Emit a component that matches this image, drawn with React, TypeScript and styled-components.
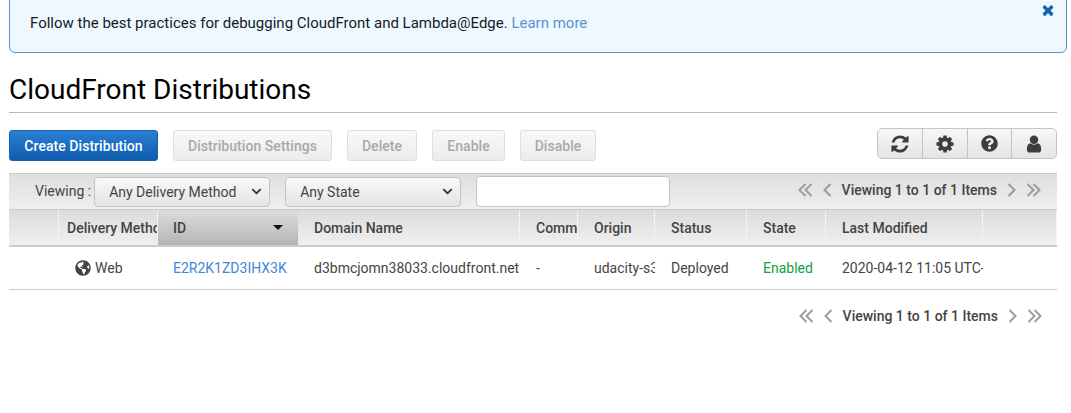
import styled, { createGlobalStyle } from 'styled-components';
import { FaGlobeAmericas, FaQuestionCircle, FaChevronDown } from 'react-icons/fa';

const COLUMNS = '50px 99px 140px 222px 58px 77px 92px 79px 157px 74px';

const REFRESH =
  'M1639 1056q0 5-1 7-64 268-268 434.5t-478 166.5q-146 0-282.5-55t-243.5-157l-129 129q-19 19-45 19t-45-19-19-45v-448q0-26 19-45t45-19h448q26 0 45 19t19 45-19 45l-137 137q71 66 161 102t187 36q134 0 250-65t186-179q11-17 53-117 8-23 30-23h192q13 0 22.5 9.5t9.5 22.5zm25-800v448q0 26-19 45t-45 19h-448q-26 0-45-19t-19-45 19-45l138-138q-148-137-349-137-134 0-250 65t-186 179q-11 17-53 117-8 23-30 23h-199q-13 0-22.5-9.5t-9.5-22.5v-7q65-268 270-434.5t480-166.5q146 0 284 55.5t245 156.5l130-129q19-19 45-19t45 19 19 45z';
const COG =
  'M1152 896q0-106-75-181t-181-75-181 75-75 181 75 181 181 75 181-75 75-181zm512-109v222q0 12-8 23t-20 13l-185 28q-19 54-39 91 35 50 107 138 10 12 10 25t-9 23q-27 37-99 108t-94 71q-12 0-26-9l-138-108q-44 23-91 38-16 136-29 186-7 28-36 28h-222q-14 0-24.5-8.5t-11.5-21.5l-28-184q-49-16-90-37l-141 107q-10 9-25 9-14 0-25-11-126-114-165-168-7-10-7-23 0-12 8-23 15-21 51-66.5t54-70.5q-27-50-41-99l-183-27q-13-2-21-12.5t-8-23.5v-222q0-12 8-23t19-13l186-28q14-46 39-92-40-57-107-138-10-12-10-24 0-10 9-23 26-36 98.5-107.5t94.5-71.5q13 0 26 10l138 107q44-23 91-38 16-136 29-186 7-28 36-28h222q14 0 24.5 8.5t11.5 21.5l28 184q49 16 90 37l142-107q9-9 24-9 13 0 25 10 129 119 165 170 7 8 7 22 0 12-8 23-15 21-51 66.5t-54 70.5q26 50 41 98l183 28q13 2 21 12.5t8 23.5z';
const USER =
  'M1536 1399q0 109-62.5 187t-150.5 78h-854q-88 0-150.5-78t-62.5-187q0-85 8.5-160.5t31.5-152 58.5-131 94-89 134.5-34.5q131 128 313 128t313-128q76 0 134.5 34.5t94 89 58.5 131 31.5 152 8.5 160.5zm-256-887q0 159-112.5 271.5t-271.5 112.5-271.5-112.5-112.5-271.5 112.5-271.5 271.5-112.5 271.5 112.5 112.5 271.5z';
const TIMES =
  'M1490 1322q0 40-28 68l-136 136q-28 28-68 28t-68-28l-294-294-294 294q-28 28-68 28t-68-28l-136-136q-28-28-28-68t28-68l294-294-294-294q-28-28-28-68t28-68l136-136q28-28 68-28t68 28l294 294 294-294q28-28 68-28t68 28l136 136q28 28 28 68t-28 68l-294 294 294 294q28 28 28 68z';

const GlobalStyle = createGlobalStyle`
  html, body { margin: 0; background: #fff; }
  body { font-family: Roboto, "Liberation Sans", sans-serif; color: #333; }
`;

const Page = styled.div`
  width: 1071px;
  height: 413px;
  overflow: hidden;
  padding: 0 14px 0 9px;
  box-sizing: border-box;
`;

const Banner = styled.div`
  position: relative;
  width: 1058px;
  height: 54px;
  box-sizing: border-box;
  margin-top: -1px;
  padding: 14px 20px 0 20px;
  font-size: 15px;
  line-height: 18px;
  color: #16191f;
  background: #eef9ff;
  border: 1px solid #5b8fc9;
  border-radius: 0 0 6px 6px;
`;

const LearnMore = styled.a`
  color: #5a92d2;
`;

const CloseIcon = styled.svg`
  position: absolute;
  top: 2px;
  right: 10px;
  width: 16px;
  height: 16px;
  fill: #0f62ae;
`;

const Title = styled.h1`
  margin: 20px 0 0;
  height: 39px;
  font-size: 28px;
  line-height: 33px;
  font-weight: 400;
  color: #000;
  border-bottom: 1px solid #b9b9b9;
`;

const Actions = styled.div`
  display: flex;
  align-items: center;
  gap: 15px;
  margin-top: 16px;
  height: 32px;
`;

const Button = styled.button<{ $primary?: boolean; $width: number }>`
  width: ${({ $width }) => $width}px;
  height: 31px;
  padding: 1px 0 0;
  box-sizing: border-box;
  font-family: inherit;
  font-size: 14px;
  font-weight: 500;
  letter-spacing: 0.05px;
  border-radius: 3px;
  color: ${({ $primary }) => ($primary ? '#fff' : '#a9a9a9')};
  border: 1px solid ${({ $primary }) => ($primary ? '#1a5fa8' : '#dedede')};
  background: ${({ $primary }) =>
    $primary ? 'linear-gradient(#2a7fd2, #0e5cae)' : 'linear-gradient(#f8f8f8, #ececec)'};
`;

const IconGroup = styled.div`
  display: flex;
  align-self: flex-start;
  margin-left: auto;
  margin-top: -1px;
  width: 180px;
  height: 31px;
  box-sizing: border-box;
  border: 1px solid #c4c4c4;
  border-radius: 5px;
  background: linear-gradient(#f7f7f7, #e4e4e4);
`;

const IconButton = styled.div`
  flex: 1;
  display: flex;
  align-items: center;
  justify-content: center;
  color: #3d3d3d;
  & + & { border-left: 1px solid #c4c4c4; }
`;

const ToolIcon = styled.svg`
  width: 20px;
  height: 20px;
  fill: currentColor;
`;

const QuestionIcon = styled(FaQuestionCircle)`
  font-size: 17px;
`;

const Toolbar = styled.div`
  display: flex;
  align-items: center;
  margin-top: 12px;
  height: 37px;
  box-sizing: border-box;
  border-top: 1px solid #c9c9c9;
  border-bottom: 1px solid #ccc;
  background: linear-gradient(#dedede, #efefef);
  padding-left: 26px;
`;

const ViewingLabel = styled.span`
  font-size: 14px;
  color: #444;
  margin-right: 3px;
  margin-top: -2px;
`;

const Select = styled.div<{ $width: number }>`
  display: flex;
  align-items: center;
  justify-content: space-between;
  width: ${({ $width }) => $width}px;
  height: 30px;
  box-sizing: border-box;
  padding: 0 7px 0 14px;
  font-size: 14px;
  color: #444;
  border: 1px solid #c4c4c4;
  border-radius: 4px;
  background: linear-gradient(#f8f8f8, #e4e4e4);

  svg { font-size: 11px; color: #333; }
  & + & { margin-left: 15px; }
`;

const SearchBox = styled.input`
  width: 194px;
  height: 31px;
  box-sizing: border-box;
  margin-left: 15px;
  border: 1px solid #c4c4c4;
  border-radius: 4px;
  background: #fff;
`;

const Pager = styled.div<{ $bottom?: boolean }>`
  display: flex;
  align-items: center;
  margin-left: auto;
  margin-right: ${({ $bottom }) => ($bottom ? '2px' : '16px')};
  margin-top: ${({ $bottom }) => ($bottom ? '-2px' : '-4px')};
  gap: 7px;
  font-size: 14px;
  font-weight: 500;
  color: #444;
`;

const PagerArrow = styled.svg`
  display: block;
  width: 15px;
  height: 14px;
  fill: none;
  stroke: #9c9c9c;
  stroke-width: 2;
`;

const HeadRow = styled.div`
  display: grid;
  grid-template-columns: ${COLUMNS};
  height: 37px;
  box-sizing: border-box;
  border-bottom: 2px solid #ccc;
  background: linear-gradient(#dcdcdc, #efefef);
`;

const HeadCell = styled.div<{ $sorted?: boolean; $pad?: number }>`
  position: relative;
  display: flex;
  align-items: center;
  overflow: hidden;
  white-space: nowrap;
  padding-left: ${({ $pad }) => $pad ?? 16}px;
  font-size: 14px;
  font-weight: 500;
  color: #444;
  border-right: 1px solid ${({ $sorted }) => ($sorted ? 'transparent' : '#f4f4f4')};
  background: ${({ $sorted }) => ($sorted ? 'linear-gradient(#dddddd, #b5b5b5)' : 'none')};
`;

const SortCaret = styled.span`
  position: absolute;
  right: 14px;
  top: 15px;
  border-left: 5px solid transparent;
  border-right: 5px solid transparent;
  border-top: 5px solid #111;
`;

const BodyRow = styled.div`
  display: grid;
  grid-template-columns: ${COLUMNS};
  height: 44px;
  box-sizing: border-box;
  border-bottom: 1px solid #ccc;
  margin-top: -1px;
`;

const BodyCell = styled.div<{ $tone?: 'link' | 'ok'; $pad?: number }>`
  display: flex;
  align-items: center;
  gap: 4px;
  overflow: hidden;
  white-space: nowrap;
  padding-left: ${({ $pad }) => $pad ?? 16}px;
  font-size: 14px;
  color: ${({ $tone }) => ($tone === 'link' ? '#3f88d8' : $tone === 'ok' ? '#0ea13a' : '#444')};
`;

const WebIcon = styled(FaGlobeAmericas)`
  font-size: 16px;
  color: #444;
`;

const FooterRow = styled.div`
  display: flex;
  margin-top: 20px;
  margin-right: 13px;
`;

const Chevrons = ({ dir, double }: { dir: 'left' | 'right'; double?: boolean }) => {
  const flip = dir === 'right' ? 'scale(-1,1) translate(-15,0)' : undefined;
  return (
    <PagerArrow viewBox="0 0 15 14">
      <g transform={flip}>
        {double ? (
          <>
            <path d="M7.5 1 1.5 7l6 6" />
            <path d="M13.5 1 7.5 7l6 6" />
          </>
        ) : (
          <path d="M10.5 1 4.5 7l6 6" />
        )}
      </g>
    </PagerArrow>
  );
};

const PagerControls = ({ bottom }: { bottom?: boolean }) => (
  <Pager $bottom={bottom}>
    <Chevrons dir="left" double />
    <Chevrons dir="left" />
    <span>Viewing 1 to 1 of 1 Items</span>
    <Chevrons dir="right" />
    <Chevrons dir="right" double />
  </Pager>
);

const Tool = ({ d }: { d: string }) => (
  <ToolIcon viewBox="0 0 1792 1792">
    <path d={d} />
  </ToolIcon>
);

export default function App() {
  return (
    <Page>
      <GlobalStyle />
      <Banner>
        Follow the best practices for debugging CloudFront and Lambda@Edge. <LearnMore>Learn more</LearnMore>
        <CloseIcon viewBox="0 0 1792 1792">
          <path d={TIMES} />
        </CloseIcon>
      </Banner>

      <Title>CloudFront Distributions</Title>

      <Actions>
        <Button $primary $width={149}>Create Distribution</Button>
        <Button $width={159}>Distribution Settings</Button>
        <Button $width={70}>Delete</Button>
        <Button $width={73}>Enable</Button>
        <Button $width={76}>Disable</Button>
        <IconGroup>
          <IconButton><Tool d={REFRESH} /></IconButton>
          <IconButton><Tool d={COG} /></IconButton>
          <IconButton><QuestionIcon /></IconButton>
          <IconButton><Tool d={USER} /></IconButton>
        </IconGroup>
      </Actions>

      <Toolbar>
        <ViewingLabel>Viewing :</ViewingLabel>
        <Select $width={176}>Any Delivery Method <FaChevronDown /></Select>
        <Select $width={176}>Any State <FaChevronDown /></Select>
        <SearchBox />
        <PagerControls />
      </Toolbar>

      <HeadRow>
        <HeadCell />
        <HeadCell $pad={8}>Delivery Method</HeadCell>
        <HeadCell $sorted $pad={15}>ID<SortCaret /></HeadCell>
        <HeadCell>Domain Name</HeadCell>
        <HeadCell>Comment</HeadCell>
        <HeadCell>Origin</HeadCell>
        <HeadCell>Status</HeadCell>
        <HeadCell>State</HeadCell>
        <HeadCell>Last Modified</HeadCell>
        <HeadCell />
      </HeadRow>

      <BodyRow>
        <BodyCell />
        <BodyCell>
          <WebIcon /> Web
        </BodyCell>
        <BodyCell $tone="link" $pad={15}>E2R2K1ZD3IHX3K</BodyCell>
        <BodyCell>d3bmcjomn38033.cloudfront.net</BodyCell>
        <BodyCell>-</BodyCell>
        <BodyCell>udacity-s3-bucket</BodyCell>
        <BodyCell>Deployed</BodyCell>
        <BodyCell $tone="ok">Enabled</BodyCell>
        <BodyCell>2020-04-12 11:05 UTC-7</BodyCell>
        <BodyCell />
      </BodyRow>

      <FooterRow>
        <PagerControls bottom />
      </FooterRow>
    </Page>
  );
}
